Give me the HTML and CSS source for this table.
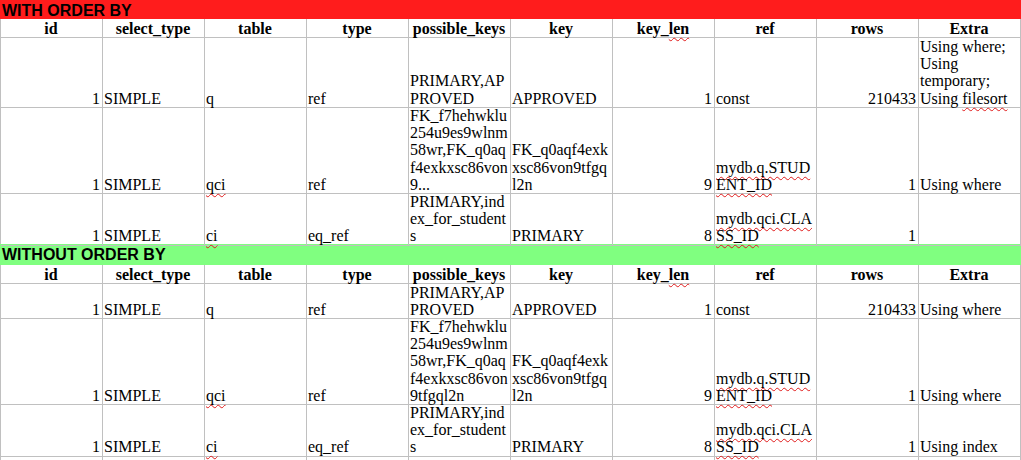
FILE: index.html
```html
<!DOCTYPE html>
<html>
<head>
<meta charset="utf-8">
<link rel="stylesheet" href="styles.css">
</head>
<body>
<div class="sheet">
  <div class="band band-red"><span>WITH ORDER BY</span></div>
  <div class="row h-head head">
    <div class="c">id</div><div class="c">select_type</div><div class="c">table</div><div class="c">type</div><div class="c">possible_keys</div><div class="c">key</div><div class="c">key_<span class="sp">len</span></div><div class="c">ref</div><div class="c">rows</div><div class="c">Extra</div>
  </div>
  <div class="row h-69">
    <div class="c num">1</div><div class="c">SIMPLE</div><div class="c">q</div><div class="c">ref</div>
    <div class="c"><span>PRIMARY,AP<br>PROVED</span></div>
    <div class="c">APPROVED</div><div class="c num">1</div><div class="c">const</div><div class="c num">210433</div>
    <div class="c"><span>Using where;<br>Using<br>temporary;<br>Using <span class="sp">filesort</span></span></div>
  </div>
  <div class="row h-86">
    <div class="c num">1</div><div class="c">SIMPLE</div><div class="c"><span class="sp">qci</span></div><div class="c">ref</div>
    <div class="c"><span>FK_f7hehwklu<br>254u9es9wlnm<br>58wr,FK_q0aq<br>f4exkxsc86von<br>9...</span></div>
    <div class="c"><span>FK_q0aqf4exk<br>xsc86von9tfgq<br>l2n</span></div>
    <div class="c num">9</div>
    <div class="c"><span><span class="sp">mydb.q.STUD</span><br><span class="sp">ENT_ID</span></span></div>
    <div class="c num">1</div><div class="c">Using where</div>
  </div>
  <div class="row h-51">
    <div class="c num">1</div><div class="c">SIMPLE</div><div class="c"><span class="sp">ci</span></div><div class="c">eq_ref</div>
    <div class="c"><span>PRIMARY,ind<br>ex_for_student<br>s</span></div>
    <div class="c">PRIMARY</div><div class="c num">8</div>
    <div class="c"><span><span class="sp">mydb.qci.CLA</span><br><span class="sp">SS_ID</span></span></div>
    <div class="c num">1</div><div class="c"></div>
  </div>

  <div class="band band-green"><span>WITHOUT ORDER BY</span></div>
  <div class="row h-head head">
    <div class="c">id</div><div class="c">select_type</div><div class="c">table</div><div class="c">type</div><div class="c">possible_keys</div><div class="c">key</div><div class="c">key_<span class="sp">len</span></div><div class="c">ref</div><div class="c">rows</div><div class="c">Extra</div>
  </div>
  <div class="row h-34">
    <div class="c num">1</div><div class="c">SIMPLE</div><div class="c">q</div><div class="c">ref</div>
    <div class="c"><span>PRIMARY,AP<br>PROVED</span></div>
    <div class="c">APPROVED</div><div class="c num">1</div><div class="c">const</div><div class="c num">210433</div>
    <div class="c">Using where</div>
  </div>
  <div class="row h-86">
    <div class="c num">1</div><div class="c">SIMPLE</div><div class="c"><span class="sp">qci</span></div><div class="c">ref</div>
    <div class="c"><span>FK_f7hehwklu<br>254u9es9wlnm<br>58wr,FK_q0aq<br>f4exkxsc86von<br>9tfgql2n</span></div>
    <div class="c"><span>FK_q0aqf4exk<br>xsc86von9tfgq<br>l2n</span></div>
    <div class="c num">9</div>
    <div class="c"><span><span class="sp">mydb.q.STUD</span><br><span class="sp">ENT_ID</span></span></div>
    <div class="c num">1</div><div class="c">Using where</div>
  </div>
  <div class="row h-52">
    <div class="c num">1</div><div class="c">SIMPLE</div><div class="c"><span class="sp">ci</span></div><div class="c">eq_ref</div>
    <div class="c"><span>PRIMARY,ind<br>ex_for_student<br>s</span></div>
    <div class="c">PRIMARY</div><div class="c num">8</div>
    <div class="c"><span><span class="sp">mydb.qci.CLA</span><br><span class="sp">SS_ID</span></span></div>
    <div class="c num">1</div><div class="c">Using index</div>
  </div>
  <div class="row h-empty">
    <div class="c"></div><div class="c"></div><div class="c"></div><div class="c"></div><div class="c"></div><div class="c"></div><div class="c"></div><div class="c"></div><div class="c"></div><div class="c"></div>
  </div>
</div>
</body>
</html>
```

FILE: styles.css
```css
html, body {
  margin: 0;
  padding: 0;
  background: #ffffff;
}

body {
  overflow: hidden;
}

.sheet {
  width: 1021px;
  font-family: "Liberation Serif", "Times New Roman", serif;
  font-size: 16px;
  line-height: 17.2px;
  color: #000000;
}

.band {
  display: flex;
  align-items: flex-end;
  box-sizing: border-box;
  width: 1021px;
  padding: 0 0 0 2px;
  font-family: "Liberation Sans", Arial, sans-serif;
  font-weight: bold;
  font-size: 16px;
  color: #000000;
  white-space: nowrap;
}

.band-red {
  height: 19px;
  background: #ff1c1c;
}

.band-green {
  height: 21px;
  padding-bottom: 2px;
  background: #80ff80;
}

.row {
  display: grid;
  grid-template-columns: repeat(10, 102px);
  box-sizing: border-box;
  width: 1021px;
  border-left: 1px solid #c0c0c0;
}

.c {
  display: flex;
  align-items: flex-end;
  justify-content: flex-start;
  box-sizing: border-box;
  min-width: 0;
  padding: 0 2px 0 1px;
  border-right: 1px solid #c0c0c0;
  border-bottom: 1px solid #c0c0c0;
  white-space: nowrap;
  overflow: visible;
}

.c.num {
  justify-content: flex-end;
}

.head .c {
  justify-content: center;
  font-weight: bold;
}

.sp {
  text-decoration: underline wavy #e01b1b;
  text-decoration-thickness: 1px;
  text-underline-offset: 3px;
  text-decoration-skip-ink: none;
}

.h-head { height: 19px; }
.h-34 { height: 34px; }
.h-51 { height: 51px; }
.h-52 { height: 52px; }
.h-69 { height: 69px; }
.h-86 { height: 86px; }
.h-empty { height: 20px; }
```
